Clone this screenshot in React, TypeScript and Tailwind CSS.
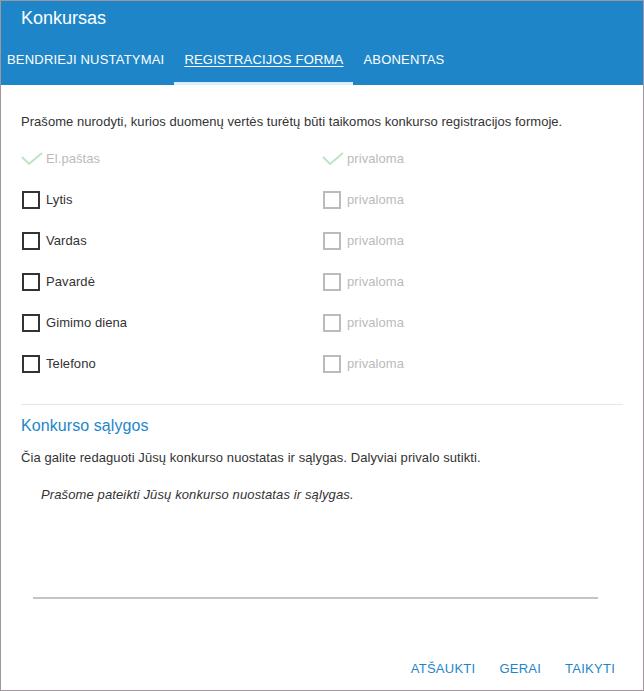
import { useState } from "react";

const fields = ["Lytis", "Vardas", "Pavardė", "Gimimo diena", "Telefono"];

const Check = () => (
  <svg width="22" height="14" viewBox="0 0 22 14" className="shrink-0">
    <path d="M1 5 L8 12 L21 1" fill="none" stroke="#bfe3c5" strokeWidth="2" />
  </svg>
);

const App = () => {
  const [tab] = useState(1);
  const tabs = ["Bendrieji nustatymai", "Registracijos forma", "Abonentas"];

  return (
    <div
      className="w-[644px] h-[691px] border border-[#a0979d] bg-white flex flex-col text-[13px] text-[#333] tracking-[0.08px]"
      style={{ fontFamily: '"Liberation Sans", Arial, sans-serif' }}
    >
      <header className="bg-[#1e86c8] h-[84px] flex flex-col">
        <h1 className="text-white text-[18px] pl-[20px] pt-[5px] leading-[24px] tracking-normal">Konkursas</h1>
        <nav className="flex mt-auto">
          {tabs.map((t, i) => (
            <div
              key={t}
              className={`uppercase text-white text-[13px] tracking-[0.2px] h-[42px] pt-[7px] border-b-[3px] ${
                i === 0 ? "pl-[6px] pr-[10px]" : "px-[10px]"
              } ${i === tab ? "border-[#dbeefb]" : "border-transparent"}`}
            >
              <span className={i === tab ? "underline underline-offset-2" : ""}>{t}</span>
            </div>
          ))}
        </nav>
      </header>

      <main className="flex-1 flex flex-col px-[20px]">
        <p className="mt-[29px] leading-[16px] tracking-[0.04px]">
          Prašome nurodyti, kurios duomenų vertės turėtų būti taikomos konkurso registracijos formoje.
        </p>

        <div className="mt-[8px] grid grid-cols-2">
          <div className="flex items-center gap-[3px] h-[41px] text-[#bbb]">
            <Check />
            <span>El.paštas</span>
          </div>
          <div className="flex items-center gap-[3px] h-[41px] text-[#bbb]">
            <Check />
            <span>privaloma</span>
          </div>
          {fields.map((f) => (
            <div key={f} className="contents">
              <div className="flex items-center h-[41px] pl-[1px]">
                <span className="w-[18px] h-[18px] border-2 border-[#333] mr-[6px]" />
                <span>{f}</span>
              </div>
              <div className="flex items-center h-[41px] pl-[1px] text-[#bbb]">
                <span className="w-[18px] h-[18px] border-2 border-[#bbb] mr-[6px]" />
                <span>privaloma</span>
              </div>
            </div>
          ))}
        </div>

        <div className="mt-[20px] border-t border-[#e6e6e6]" />
        <h2 className="mt-[11px] text-[16px] text-[#1e86c8] leading-[20px]">Konkurso sąlygos</h2>
        <p className="mt-[14px] leading-[16px]">
          Čia galite redaguoti Jūsų konkurso nuostatas ir sąlygas. Dalyviai privalo sutikti.
        </p>
        <p className="mt-[21px] pl-[20px] italic leading-[16px] tracking-[0.12px]">
          Prašome pateikti Jūsų konkurso nuostatas ir sąlygas.
        </p>
        <div className="mt-[94px] ml-[12px] mr-[25px] border-t-2 border-[#c4c4c4]" />

        <div className="mt-auto mb-[12px] flex justify-end gap-[24px] pr-[8px] text-[#1e86c8] uppercase tracking-[0.25px]">
          <span>Atšaukti</span>
          <span>Gerai</span>
          <span>Taikyti</span>
        </div>
      </main>
    </div>
  );
};

export default App;
